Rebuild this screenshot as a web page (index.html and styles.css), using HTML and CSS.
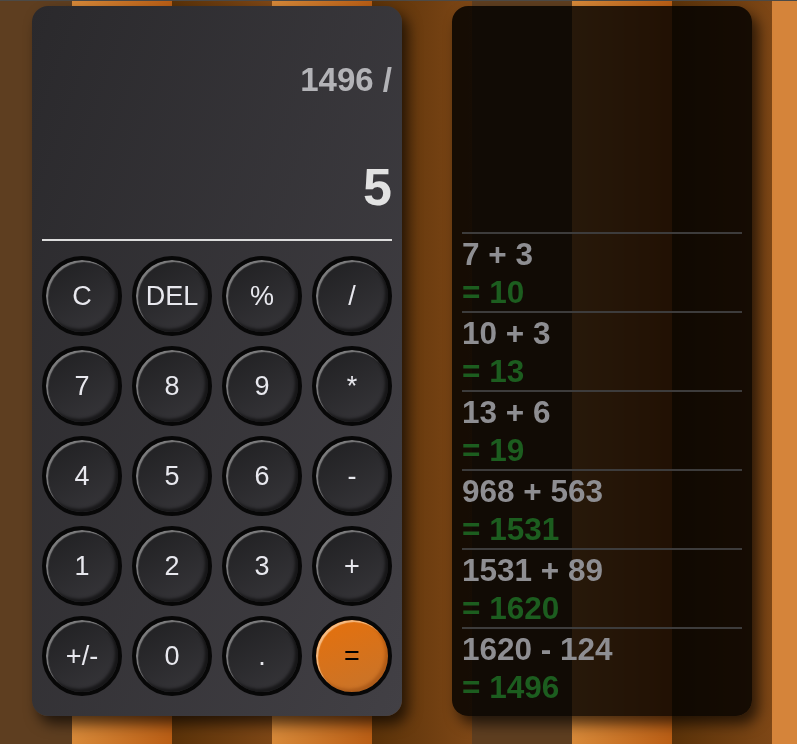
FILE: index.html
```html
<!DOCTYPE html>
<html lang="en">
<head>
<meta charset="utf-8">
<title>Calculator</title>
<link rel="stylesheet" href="styles.css">
</head>
<body>
<div class="backdrop" aria-hidden="true">
  <span class="stripe muddy first"></span>
  <span class="stripe orange"></span>
  <span class="stripe brown"></span>
  <span class="stripe orange"></span>
  <span class="stripe brown"></span>
  <span class="stripe muddy"></span>
  <span class="stripe orange"></span>
  <span class="stripe brown"></span>
  <span class="stripe orange last"></span>
</div>
<main class="app">
  <section class="calc">
    <div class="display">
      <div class="prev">1496 /</div>
      <div class="cur">5</div>
    </div>
    <div class="keys">
      <button class="key">C</button>
      <button class="key">DEL</button>
      <button class="key">%</button>
      <button class="key">/</button>
      <button class="key">7</button>
      <button class="key">8</button>
      <button class="key">9</button>
      <button class="key">*</button>
      <button class="key">4</button>
      <button class="key">5</button>
      <button class="key">6</button>
      <button class="key">-</button>
      <button class="key">1</button>
      <button class="key">2</button>
      <button class="key">3</button>
      <button class="key">+</button>
      <button class="key">+/-</button>
      <button class="key">0</button>
      <button class="key">.</button>
      <button class="key equals">=</button>
    </div>
  </section>
  <aside class="history">
    <div class="entry"><div class="expr">7 + 3</div><div class="res">= 10</div></div>
    <div class="entry"><div class="expr">10 + 3</div><div class="res">= 13</div></div>
    <div class="entry"><div class="expr">13 + 6</div><div class="res">= 19</div></div>
    <div class="entry"><div class="expr">968 + 563</div><div class="res">= 1531</div></div>
    <div class="entry"><div class="expr">1531 + 89</div><div class="res">= 1620</div></div>
    <div class="entry"><div class="expr">1620 - 124</div><div class="res">= 1496</div></div>
  </aside>
</main>
</body>
</html>
```

FILE: styles.css
```css
* { box-sizing: border-box; }

html, body {
  margin: 0;
  padding: 0;
  height: 100%;
  overflow: hidden;
}

body {
  font-family: "Liberation Sans", Arial, sans-serif;
  background: #5e3e20;
}

.backdrop {
  position: fixed;
  inset: 0;
  z-index: 0;
  display: flex;
  border-top: 1px solid #4c4a47;
}

.stripe {
  flex: 0 0 100px;
  height: 100%;
}
.stripe.first { flex-basis: 72px; }
.stripe.last { flex: 1 1 auto; background: #d5843a; }

.muddy { background: #5e3e20; }
.orange { background: linear-gradient(to right, #d78939, #ba5e15); }
.brown { background: linear-gradient(to right, #5a3209, #7e4716); }

.app {
  position: relative;
  z-index: 1;
  display: flex;
  gap: 50px;
  padding: 6px 0 0 32px;
}

.calc {
  width: 370px;
  height: 710px;
  border-radius: 16px;
  padding: 0 10px 20px;
  background: linear-gradient(110deg, #2a292c, #424045);
  box-shadow: 6px 8px 14px rgba(0, 0, 0, 0.65);
}

.display {
  height: 235px;
  padding-top: 55px;
  border-bottom: 2px solid #dcdcdc;
  text-align: right;
  font-weight: bold;
}

.prev {
  font-size: 33px;
  line-height: 38px;
  color: #b3b3b7;
  margin-bottom: 58px;
}

.cur {
  font-size: 52px;
  line-height: 60px;
  color: #e2e2e2;
}

.keys {
  margin-top: 15px;
  display: grid;
  grid-template-columns: repeat(4, 80px);
  grid-auto-rows: 80px;
  gap: 10px;
}

.key {
  width: 80px;
  height: 80px;
  padding: 0;
  border-radius: 50%;
  border: 4px solid #070707;
  background: linear-gradient(150deg, #1f1f21, #38373b);
  box-shadow: inset 2px 2px 1px rgba(200, 200, 200, 0.55), inset -3px -3px 3px rgba(0, 0, 0, 0.55);
  color: #e8e8ee;
  font-family: "Liberation Sans", Arial, sans-serif;
  font-size: 27px;
  line-height: 1;
  cursor: pointer;
}

.key.equals {
  background: linear-gradient(160deg, #e6700b, #c6742c);
  box-shadow: inset 2px 2px 1px rgba(255, 220, 180, 0.7), inset -3px -3px 3px rgba(120, 50, 0, 0.35);
  color: #000;
}

.history {
  width: 300px;
  height: 710px;
  border-radius: 16px;
  padding: 10px;
  background: rgba(0, 0, 0, 0.82);
  box-shadow: 6px 8px 14px rgba(0, 0, 0, 0.65);
  display: flex;
  flex-direction: column;
  justify-content: flex-end;
}

.entry {
  border-top: 2px solid #3d3c3c;
  padding-top: 2px;
  font-size: 31.5px;
  font-weight: bold;
  line-height: 37.5px;
}

.expr { color: #8e8e92; }
.res { color: #1c5d1f; }
```
